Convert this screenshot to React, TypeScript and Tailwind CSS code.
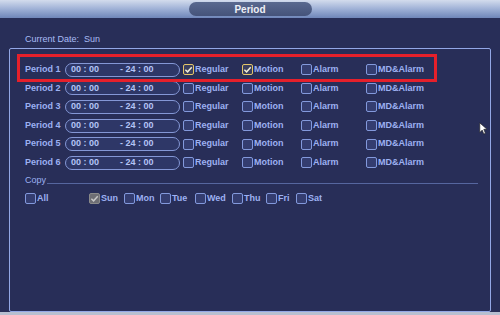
import React from "react";

const font = { fontFamily: '"Liberation Sans", Arial, sans-serif' };

function Box({ checked, tone = "blue" }: { checked?: boolean; tone?: "blue" | "gold" | "gray" }) {
  const cls =
    tone === "gold"
      ? "border-[#e2c569] bg-[#3b3f5e]"
      : tone === "gray"
        ? "border-[#8a8a8a] bg-[#6e6e74]"
        : "border-[#8399dc] bg-[#343d70]";
  return (
    <span className={`relative inline-flex h-[11px] w-[11px] shrink-0 items-center justify-center rounded-[2px] border ${cls}`}>
      {checked && (
        <svg viewBox="0 0 10 10" className="h-[9px] w-[9px]">
          <path
            d="M1.5 5.2 L4 7.6 L8.6 2.4"
            fill="none"
            stroke={tone === "gray" ? "#c8c8c8" : "#f3f0d8"}
            strokeWidth="1.6"
          />
        </svg>
      )}
    </span>
  );
}

function Check({ label, checked, tone, w }: { label: string; checked?: boolean; tone?: "blue" | "gold" | "gray"; w: string }) {
  return (
    <div className={`flex items-center gap-px ${w}`}>
      <Box checked={checked} tone={tone} />
      <span>{label}</span>
    </div>
  );
}

function TimeField() {
  return (
    <div className="flex h-[14px] w-[115px] items-center rounded-full border border-[#8497d6] bg-[#2e3767] pl-[5px] text-[#b4c4f6]">
      <span className="w-[49px]">00 : 00</span>
      <span>- 24 : 00</span>
    </div>
  );
}

function PeriodRow({ n, first }: { n: number; first?: boolean }) {
  return (
    <div className="flex h-[18.6px] items-center">
      <span className="w-[40px]">Period {n}</span>
      <TimeField />
      <div className="ml-[3px] flex items-center">
        <Check label="Regular" checked={first} tone={first ? "gold" : "blue"} w="w-[59px]" />
        <Check label="Motion" checked={first} tone={first ? "gold" : "blue"} w="w-[59px]" />
        <Check label="Alarm" w="w-[65px]" />
        <Check label="MD&Alarm" w="w-[70px]" />
      </div>
    </div>
  );
}

export default function App() {
  return (
    <div className="relative h-[315px] w-[500px] overflow-hidden bg-[#282e58] text-[9px] font-bold text-[#9db1f2]" style={font}>
      {/* title bar */}
      <div className="flex h-[18px] items-center justify-center bg-gradient-to-b from-[#d3dced] via-[#9fb1d6] to-[#6f86b9]">
        <div className="flex h-[14px] w-[123px] items-center justify-center rounded-full bg-gradient-to-b from-[#59698f] to-[#45537a] text-[10px] text-[#eef0f6]">
          Period
        </div>
      </div>

      <div className="pt-[15px]">
        <div className="mb-[1px] flex gap-[5px] pl-[25px] text-[9px] font-normal text-[#a9bcf5]">
          <span>Current Date:</span>
          <span>Sun</span>
        </div>

        <div className="relative ml-[9px] h-[264px] w-[482px] rounded-[2px] border-[1.5px] border-[#93a7e6] pl-[15px] pt-[12px]">
          {/* highlight */}
          <div className="absolute left-[7px] top-[5px] h-[28px] w-[420px] border-[3px] border-[#e5202b]" />

          {[1, 2, 3, 4, 5, 6].map((n) => (
            <PeriodRow key={n} n={n} first={n === 1} />
          ))}

          <div className="mt-[2px] flex items-center">
            <span className="font-normal">Copy</span>
            <div className="ml-[1px] mt-[5px] h-px w-[431px] bg-[#56669f]" />
          </div>

          <div className="mt-[4px] flex items-center">
            <Check label="All" w="w-[64px]" />
            <Check label="Sun" checked tone="gray" w="w-[35px]" />
            <Check label="Mon" w="w-[36px]" />
            <Check label="Tue" w="w-[35px]" />
            <Check label="Wed" w="w-[37px]" />
            <Check label="Thu" w="w-[34px]" />
            <Check label="Fri" w="w-[30px]" />
            <Check label="Sat" w="w-[40px]" />
          </div>
        </div>
      </div>

      {/* bottom edge */}
      <div className="absolute bottom-0 left-0 h-[3px] w-full bg-[#b7bfd0]" />

      {/* mouse cursor */}
      <svg viewBox="0 0 10 16" className="absolute left-[479px] top-[122px] h-[13px] w-[8px]">
        <path d="M1 1 L1 13 L4 10 L6 15 L8 14 L6 9 L10 9 Z" fill="#ffffff" stroke="#222" strokeWidth="0.8" />
      </svg>
    </div>
  );
}
